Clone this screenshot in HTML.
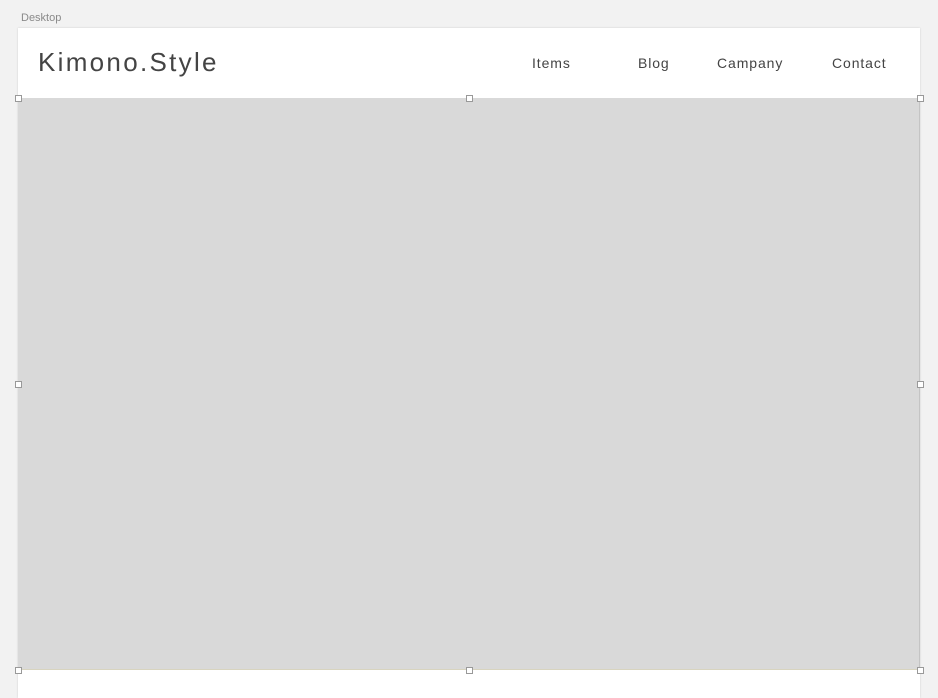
<!DOCTYPE html>
<html><head><meta charset="utf-8"><style>
*{margin:0;padding:0;box-sizing:border-box}
body{width:938px;height:685px;background:#f2f2f2;position:relative;overflow:hidden;font-family:"Liberation Sans",sans-serif;color:#444}
.lbl{position:absolute;left:21px;top:12px;font-size:11px;color:#8a8a8a}
.art{position:absolute;left:18px;top:28px;width:902px;height:670px;background:#fff;box-shadow:0 0 2px rgba(0,0,0,.15)}
.logo{position:absolute;left:38px;top:47px;font-size:26px;letter-spacing:2.3px;color:#444}
.nav{position:absolute;top:55px;font-size:14px;letter-spacing:.9px;color:#444}
.hero{position:absolute;left:18px;top:98px;width:902px;height:572px;background:#d9d9d9;border-bottom:1px solid #d8d4bf;border-right:1px solid #c4c4c4}
.h{position:absolute;width:7px;height:7px;background:#fff;border:1px solid #999}
</style></head><body>
<div class="lbl">Desktop</div>
<div class="art"></div>
<div class="logo">Kimono.Style</div>
<div class="nav" style="left:532px">Items</div>
<div class="nav" style="left:638px">Blog</div>
<div class="nav" style="left:717px">Campany</div>
<div class="nav" style="left:832px">Contact</div>
<div class="hero"></div>
<div class="h" style="left:15px;top:95px"></div>
<div class="h" style="left:466px;top:95px"></div>
<div class="h" style="left:917px;top:95px"></div>
<div class="h" style="left:15px;top:381px"></div>
<div class="h" style="left:917px;top:381px"></div>
<div class="h" style="left:15px;top:667px"></div>
<div class="h" style="left:466px;top:667px"></div>
<div class="h" style="left:917px;top:667px"></div>
</body></html>
